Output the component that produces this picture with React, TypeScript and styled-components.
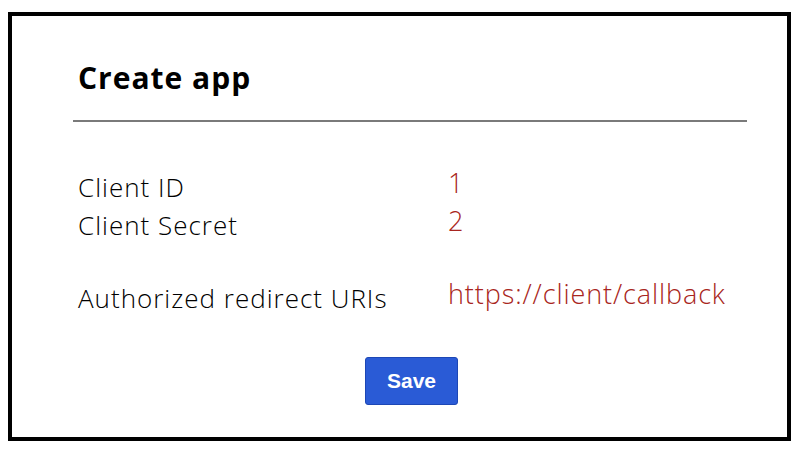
import styled, { createGlobalStyle } from "styled-components";

const GlobalStyle = createGlobalStyle`
  html, body {
    margin: 0;
    padding: 0;
    background: #ffffff;
  }
`;

type Field = {
  label: string;
  value: string;
  spaced?: boolean;
};

const fields: Field[] = [
  { label: "Client ID", value: "1" },
  { label: "Client Secret", value: "2" },
  { label: "Authorized redirect URIs", value: "https://client/callback", spaced: true },
];

export default function App() {
  return (
    <>
      <GlobalStyle />
      <Frame>
        <Header>
          <Title>Create app</Title>
        </Header>
        <Fields>
          {fields.map((field) => (
            <Row key={field.label} $spaced={field.spaced}>
              <Label>{field.label}</Label>
              <Value>{field.value}</Value>
            </Row>
          ))}
        </Fields>
        <Actions>
          <SaveButton type="button">Save</SaveButton>
        </Actions>
      </Frame>
    </>
  );
}

const Frame = styled.div`
  box-sizing: border-box;
  margin: 12px 10px 0 8px;
  width: 783px;
  height: 429px;
  border: 4px solid #000000;
  background: #ffffff;
  display: flex;
  flex-direction: column;
`;

const Header = styled.div`
  margin: 0 40px 0 61px;
  padding: 42px 0 22px 5px;
  border-bottom: 2px solid #7a7a7a;
`;

const Title = styled.h1`
  margin: 0;
  font-family: "Open Sans", "Liberation Sans", sans-serif;
  font-size: 30px;
  font-weight: 700;
  letter-spacing: 1px;
  line-height: 40px;
  color: #000000;
`;

const Fields = styled.div`
  display: flex;
  flex-direction: column;
  padding: 46px 0 0 66px;
`;

const Row = styled.div<{ $spaced?: boolean }>`
  display: grid;
  grid-template-columns: 370px 1fr;
  align-items: baseline;
  margin-top: ${(p) => (p.$spaced ? "35px" : "0")};
`;

const Label = styled.span`
  font-family: "Open Sans", "Liberation Sans", sans-serif;
  font-size: 26px;
  font-weight: 300;
  letter-spacing: 1px;
  line-height: 38px;
  color: #000000;
`;

const Value = styled.span`
  position: relative;
  top: -4px;
  font-family: "Open Sans", "Liberation Sans", sans-serif;
  font-size: 27px;
  font-weight: 300;
  letter-spacing: 0.9px;
  line-height: 38px;
  color: #a82520;
`;

const Actions = styled.div`
  display: flex;
  justify-content: center;
  padding-top: 40px;
  padding-left: 24px;
`;

const SaveButton = styled.button`
  width: 93px;
  height: 48px;
  border: 1px solid #1d47b5;
  border-radius: 3px;
  background: #2a5bd6;
  color: #ffffff;
  font-family: "Liberation Sans", Arial, sans-serif;
  font-size: 21px;
  font-weight: 700;
  cursor: pointer;
`;
